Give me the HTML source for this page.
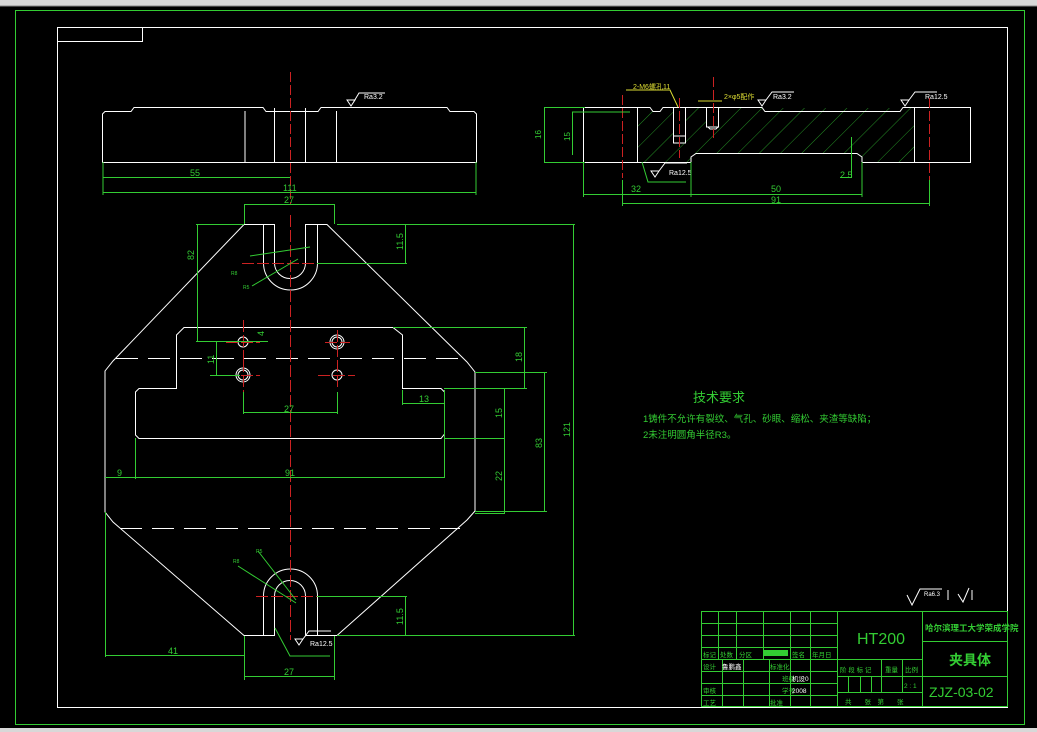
<!DOCTYPE html>
<html><head><meta charset="utf-8"><style>
html,body{margin:0;padding:0;background:#000;width:1037px;height:732px;overflow:hidden}
svg{display:block}
text{font-family:"Liberation Sans","Noto Sans CJK SC",sans-serif}
</style></head><body>
<svg width="1037" height="732" viewBox="0 0 1037 732" xmlns="http://www.w3.org/2000/svg">
<rect x="0" y="0" width="1037" height="732" fill="#000"/>
<rect x="0" y="0" width="1037" height="6" fill="#d8d8d8"/>
<line x1="0" y1="6" x2="1037" y2="6" fill="none" stroke="#888"/>
<rect x="0" y="728" width="1037" height="4" fill="#d8d8d8"/>
<g fill="none" stroke="#3c3" stroke-width="1">
<rect x="15.5" y="10.5" width="1009" height="714"/>
</g>
<g fill="none" stroke="#fff" stroke-width="1">
<rect x="57.5" y="27.5" width="950" height="680"/>
<rect x="57.5" y="27.5" width="85" height="14"/>
</g>

<!-- front view -->
<g fill="none" stroke="#fff" stroke-width="1">
<path d="M102.5 162.5 V114 L105 111.5 H131 L134 107.5 H263 L266 111.5 H318 L321 107.5 H447 L450 111.5 H474 L476.5 114 V162.5 Z"/>
<line x1="245" y1="111" x2="245" y2="162"/><line x1="274.5" y1="108" x2="274.5" y2="162"/>
<line x1="305.5" y1="108" x2="305.5" y2="162"/><line x1="336.5" y1="111" x2="336.5" y2="162"/>
<path d="M347 100 l4 6 l4 -6 z M353 103 l6 -10 h26"/>
</g>
<text x="364" y="99" fill="#fff" font-size="7">Ra3.2</text>
<line x1="290.5" y1="72" x2="290.5" y2="205" stroke="#c22" stroke-dasharray="10 3"/>
<g stroke="#3c3" fill="none">
<path d="M103 162 V195 M476 162 V195 M103 177.5 H290 M103 192.5 H476"/>
</g>
<text x="190" y="176" fill="#3c3" font-size="9">55</text>
<text x="283" y="191" fill="#3c3" font-size="9">111</text>

<!-- section view -->
<defs><pattern id="h" width="15" height="15" patternUnits="userSpaceOnUse" patternTransform="rotate(45)"><line x1="0" y1="0" x2="0" y2="15" stroke="#3c3" stroke-width="0.7"/></pattern></defs>
<path d="M637 108 H650 L653 112 H660 L663 108 H914 V162 H862 V157 L857 153 H696 L691 157 V162 H637 Z" fill="url(#h)"/>
<rect x="673" y="108" width="13" height="35" fill="#000"/><rect x="706" y="108" width="13" height="19" fill="#000"/>
<g fill="none" stroke="#fff" stroke-width="1">
<path d="M583.5 107.5 H650 L653 111.5 H660 L663 107.5 H762 L765 111.5 H900 L903 107.5 H970.5 V162.5 H862 V157 L857 153.5 H696 L691 157 V162.5 H583.5 Z"/>
<line x1="637.5" y1="108" x2="637.5" y2="162"/><line x1="914.5" y1="108" x2="914.5" y2="162"/>
<path d="M673.5 108 V136 M685.5 108 V136 M673.5 136 H685.5 V143 H673.5 Z M706.5 108 V127 H718.5 V108 M708 127 l2 2 h6 l2 -2"/>
<path d="M762 106 l4 -6 h-8 z M766 100 l6 -8 h22 M905 106 l4 -6 h-8 z M909 100 l6 -8 h22 M655 177 l4 -6 h-8 z M659 171 l6 -8 h22"/>
</g>
<text x="773" y="99" fill="#fff" font-size="7">Ra3.2</text>
<text x="925" y="99" fill="#fff" font-size="7">Ra12.5</text>
<text x="669" y="175" fill="#fff" font-size="7">Ra12.5</text>
<g stroke="#c22" stroke-dasharray="10 3"><line x1="622.5" y1="95" x2="622.5" y2="178"/><line x1="679.5" y1="98" x2="679.5" y2="158"/><line x1="713.5" y1="77" x2="713.5" y2="138"/><line x1="929.5" y1="98" x2="929.5" y2="180"/></g>
<g stroke="#3c3" fill="none">
<path d="M544 107.5 H585 M544 162.5 H585 M544.5 108 V162 M572.5 112 V155 M572 112 H630"/>
<path d="M583.5 162 V197 M691 162 V197 M862 162 V197 M622.5 180 V206 M929.5 180 V206 M583 194.5 H862 M622 203.5 H929"/>
<path d="M851.5 137 V178 M840 177.5 H852 M642 162 L648 182 H686"/>
</g>
<path d="M626 90 H670 L678 107" stroke="#dd3" fill="none"/>
<path d="M698 101 H722" stroke="#dd3" fill="none"/>
<text x="633" y="89" fill="#dd3" font-size="7">2-M6螺孔11</text>
<text x="724" y="99" fill="#dd3" font-size="7">2×φ5配作</text>
<text x="541" y="139" fill="#3c3" font-size="8" transform="rotate(-90 541 139)">16</text>
<text x="570" y="141" fill="#3c3" font-size="8" transform="rotate(-90 570 141)">15</text>
<text x="631" y="192" fill="#3c3" font-size="9">32</text>
<text x="771" y="192" fill="#3c3" font-size="9">50</text>
<text x="771" y="203" fill="#3c3" font-size="9">91</text>
<text x="840" y="178" fill="#3c3" font-size="9">2.5</text>

<!-- plan view -->
<g fill="none" stroke="#fff" stroke-width="1">
<path d="M244 224.5 H274.5 V263 A15.5 15.5 0 0 0 305.5 263 V224.5 H327 L467 362 L475 372 V511 L467 520 L337 635.5 H305.5 V596 A15.5 15.5 0 0 0 274.5 596 V635.5 H244 L113 522 L105 512 V371 L113 361 Z"/>
<path d="M263.5 224 V263 A27 27 0 0 0 317.5 263 V224 M263.5 635 V596 A27 27 0 0 1 317.5 596 V635"/>
<path d="M184 327.5 H393 L402.5 335 V388.5 H441 L444.5 392 V434 L441 438.5 H139 L135.5 435 V392 L139 388.5 H176.5 V335 Z"/>
<path d="M116 358.5 H463 M120 528.5 H460" stroke-dasharray="22 10"/>
<circle cx="243" cy="342" r="5"/><circle cx="243" cy="375" r="5"/><circle cx="243" cy="375" r="7"/>
<circle cx="337" cy="342" r="5"/><circle cx="337" cy="342" r="7"/><circle cx="337" cy="375" r="5"/>
<path d="M299 645 l4 -6 h-8 z M303 639 l6 -8 h22"/>
</g>
<text x="310" y="646" fill="#fff" font-size="7">Ra12.5</text>
<g stroke="#c22" stroke-dasharray="12 3" fill="none">
<line x1="290.5" y1="215" x2="290.5" y2="640"/>
<path d="M242 263.5 H338 M256 596.5 H338 M226 342.5 H260 M243.5 320 V360 M226 375.5 H260 M243.5 360 V392 M325 342.5 H350 M337.5 330 V358 M318 375.5 H355 M337.5 360 V390"/>
</g>
<g stroke="#3c3" fill="none">
<path d="M244.5 204 V224 M334.5 204 V224 M244 204.5 H335"/>
<path d="M196 224.5 H244 M196 341.5 H268 M197.5 225 V341"/>
<path d="M337 224.5 H575 M317 263.5 H407 M405.5 225 V263 M573.5 225 V635 M337 635.5 H575 M317 596.5 H407 M405.5 597 V635"/>
<path d="M393 327.5 H527 M524.5 328 V388 M444 388.5 H527 M475 372.5 H547 M475 511.5 H547 M544.5 373 V511 M504.5 389 V438 M445 438.5 H505 M504.5 439 V513 M475 513.5 H505"/>
<path d="M402.5 390 V405 M402 403.5 H445 M444.5 390 V478"/>
<path d="M243.5 392 V414 M337.5 392 V414 M243 412.5 H338 M216.5 342 V375 M210 375.5 H240"/>
<path d="M105.5 512 V657 M135.5 438 V479 M105 477.5 H445 M244.5 636 V680 M334.5 636 V680 M105 655.5 H244 M244 676.5 H335"/>
<path d="M250 256 L310 247 M252 286 L298 259 M238 566 L296 603 M258 551 L296 600 M275 628 L290 656 H330"/>
</g>
<g fill="#3c3" font-size="9">
<text x="284" y="203">27</text>
<text x="194" y="260" transform="rotate(-90 194 260)">82</text>
<text x="403" y="250" transform="rotate(-90 403 250)">11.5</text>
<text x="570" y="437" transform="rotate(-90 570 437)">121</text>
<text x="522" y="362" transform="rotate(-90 522 362)">18</text>
<text x="542" y="448" transform="rotate(-90 542 448)">83</text>
<text x="502" y="418" transform="rotate(-90 502 418)">15</text>
<text x="502" y="481" transform="rotate(-90 502 481)">22</text>
<text x="419" y="402">13</text>
<text x="284" y="412">27</text>
<text x="214" y="364" transform="rotate(-90 214 364)">11</text>
<text x="264" y="336" transform="rotate(-90 264 336)">4</text>
<text x="117" y="476">9</text>
<text x="285" y="476">91</text>
<text x="168" y="654">41</text>
<text x="284" y="675">27</text>
<text x="403" y="625" transform="rotate(-90 403 625)">11.5</text>
<text x="231" y="275" font-size="5">R8</text>
<text x="243" y="289" font-size="5">R5</text>
<text x="233" y="563" font-size="5">R8</text>
<text x="256" y="553" font-size="5">R5</text>
</g>

<!-- tech requirements -->
<g fill="#3c3">
<text x="693" y="402" font-size="13">技术要求</text>
<text x="643" y="422" font-size="9.5">1铸件不允许有裂纹、气孔、砂眼、缩松、夹渣等缺陷；</text>
<text x="643" y="438" font-size="9.5">2未注明圆角半径R3。</text>
</g>

<!-- roughness above title -->
<g stroke="#fff" fill="none"><path d="M907 595 l5 10 l8 -16 h22 M948 590 V600 M958 594 l5 8 l6 -14 M972 590 V600"/></g>
<text x="924" y="596" fill="#fff" font-size="6">Ra6.3</text>

<!-- title block -->
<g stroke="#3c3" fill="none" stroke-width="1">
<rect x="701.5" y="611.5" width="306" height="95"/>
<path d="M702 623.5 H837 M702 635.5 H837 M702 647.5 H837 M702 659.5 H837 M702 671.5 H837 M702 683.5 H837 M702 695.5 H837"/>
<path d="M718.5 612 V659 M736.5 612 V659 M763.5 612 V659 M790.5 612 V707 M810.5 612 V707 M722.5 659 V707 M743.5 659 V707 M769.5 659 V707"/>
<path d="M837.5 612 V707 M922.5 612 V707 M837 659.5 H922 M837 676.5 H1008 M837 692.5 H922 M922 641.5 H1008"/>
<path d="M881.5 659 V692 M902.5 659 V692 M848.5 677 V692 M860.5 677 V692 M871.5 677 V692"/>
</g>
<rect x="763" y="650" width="25" height="6" fill="#3c3"/>
<g fill="#3c3" font-size="6.5">
<text x="703" y="657">标记</text><text x="720" y="657">处数</text><text x="739" y="657">分区</text><text x="792" y="657">签名</text><text x="812" y="657">年月日</text>
<text x="703" y="669">设计</text><text x="770" y="669">标准化</text>
<text x="782" y="681">班级</text><text x="703" y="693">审核</text><text x="782" y="693">学号</text>
<text x="703" y="705">工艺</text><text x="770" y="705">批准</text>
<text x="840" y="672">阶 段 标 记</text><text x="885" y="672">重量</text><text x="905" y="672">比例</text>
<text x="904" y="688">2 : 1</text>
<text x="845" y="704">共　　张　第　　张</text>
</g>
<g fill="#fff" font-size="6.5"><text x="722" y="669">鲁鹏鑫</text><text x="792" y="681">机设0</text><text x="792" y="693">2008</text></g>
<text x="857" y="644" fill="#3c3" font-size="16">HT200</text>
<text x="925" y="631" fill="#3c3" font-size="8.5" font-weight="bold">哈尔滨理工大学荣成学院</text>
<text x="949" y="665" fill="#3c3" font-size="14" font-weight="bold">夹具体</text>
<text x="929" y="697" fill="#3c3" font-size="14">ZJZ-03-02</text>
</svg>
</body></html>
